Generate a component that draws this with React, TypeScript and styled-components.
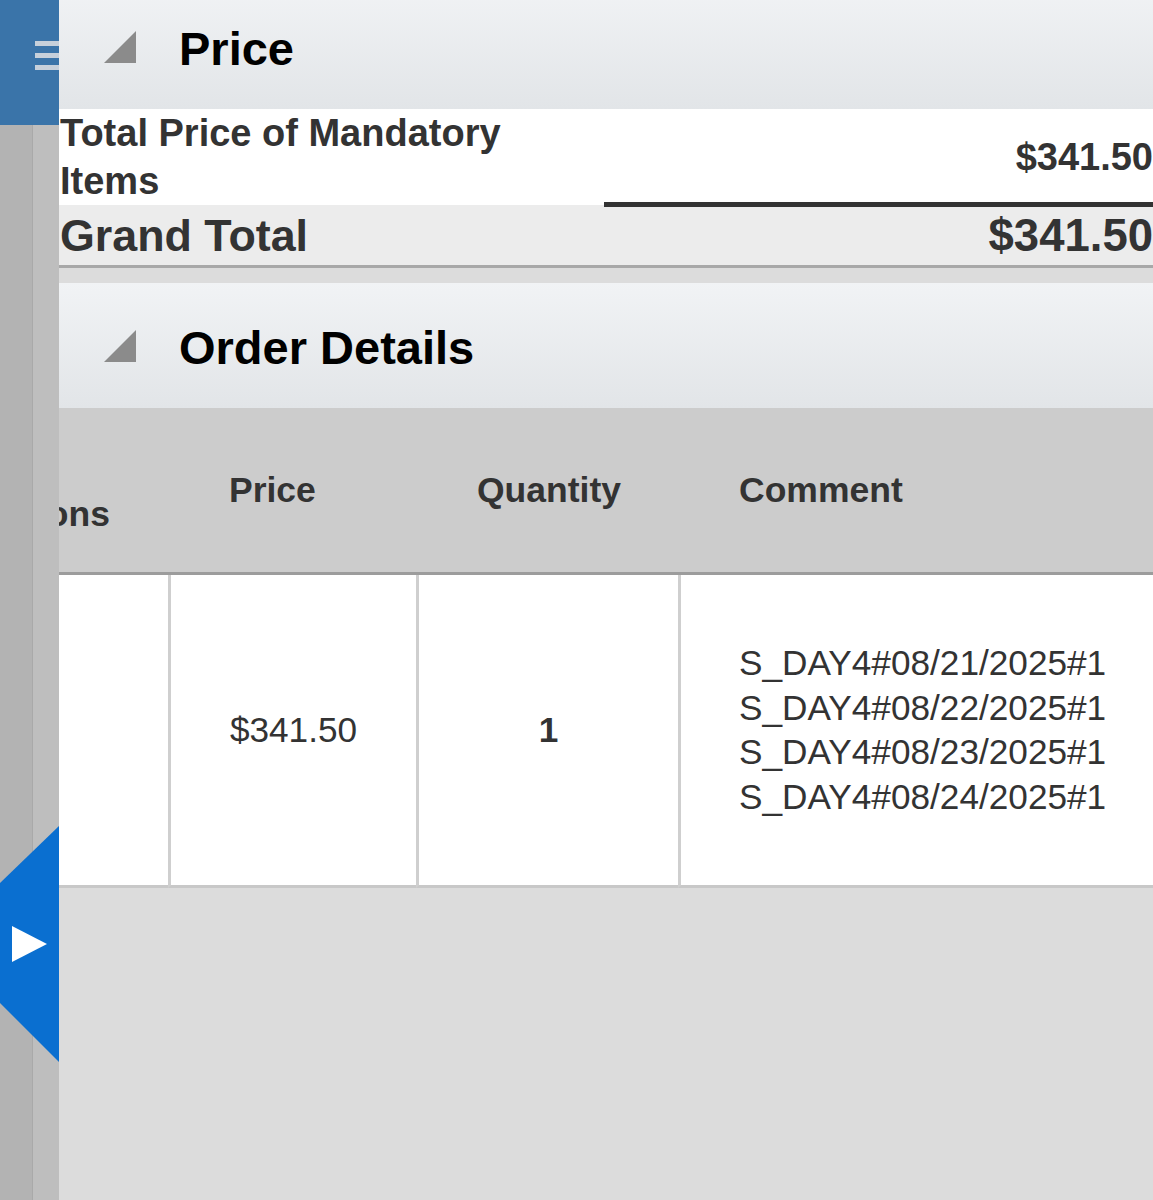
import React from "react";
import styled, { createGlobalStyle } from "styled-components";

const GlobalStyle = createGlobalStyle`
  html, body {
    margin: 0;
    padding: 0;
  }
  body {
    background: #dcdcdc;
    color: #333;
    font-family: "Liberation Sans", Arial, Helvetica, sans-serif;
  }
  * {
    box-sizing: border-box;
  }
`;

const Shell = styled.div`
  display: flex;
  min-height: 1200px;
  overflow: hidden;
`;

/* ---------- left rail ---------- */

const Sidebar = styled.aside`
  position: relative;
  flex: 0 0 59px;
  display: flex;
  flex-direction: column;
  background: linear-gradient(
    to right,
    #b3b3b3 0,
    #b3b3b3 32px,
    #a9a9a9 32px,
    #a9a9a9 33px,
    #bebebe 33px
  );
`;

const MenuBlock = styled.div`
  height: 125px;
  background: #3a74a9;
  display: flex;
  justify-content: flex-end;
  padding-top: 41px;
`;

const MenuIcon = styled.div`
  width: 24px;
  display: flex;
  flex-direction: column;
  gap: 7px;
`;

const MenuLine = styled.span`
  display: block;
  height: 5px;
  background: #c6d0db;
`;

const DrawerTab = styled.button`
  position: absolute;
  left: 0;
  top: 826px;
  width: 59px;
  height: 236px;
  padding: 0 0 0 12px;
  border: 0;
  background: #0a6fd0;
  clip-path: polygon(100% 0, 0 57px, 0 177px, 100% 100%);
  display: flex;
  align-items: center;
  cursor: pointer;
`;

const PlayMark = styled.span`
  width: 0;
  height: 0;
  border-left: 35px solid #fff;
  border-top: 18px solid transparent;
  border-bottom: 18px solid transparent;
`;

/* ---------- main column ---------- */

const Main = styled.main`
  flex: 1;
  min-width: 0;
  overflow: hidden;
`;

const Scroller = styled.div`
  margin-top: -16px;
`;

const SectionHeader = styled.div`
  height: 125px;
  display: flex;
  align-items: center;
  gap: 43px;
  padding-left: 45px;
  background: linear-gradient(to bottom, #f1f3f5, #e2e5e8);
`;

const SectionTitle = styled.h2`
  margin: 0;
  padding-top: 3px;
  font-size: 47px;
  line-height: 1;
  font-weight: 700;
  color: #000;
`;

const Collapse = () => (
  <svg width="32" height="32" viewBox="0 0 32 32" aria-hidden="true">
    <polygon points="32,0 32,32 0,32" fill="#8b8b8b" />
  </svg>
);

/* ---------- price summary ---------- */

const Summary = styled.div`
  display: grid;
  grid-template-columns: 545px 1fr;
  border-bottom: 3px solid #a8a8a8;
  margin-bottom: 15px;
`;

const SummaryLabel = styled.div<{ $grand?: boolean }>`
  background: ${(p) => (p.$grand ? "#ececec" : "#fff")};
  padding: 0 40px 0 1px;
  font-weight: 700;
  font-size: ${(p) => (p.$grand ? "44.8px" : "38px")};
  line-height: ${(p) => (p.$grand ? "60px" : "48px")};
  color: #333;
`;

const SummaryValue = styled.div<{ $grand?: boolean }>`
  background: ${(p) => (p.$grand ? "#ececec" : "#fff")};
  display: flex;
  align-items: center;
  justify-content: flex-end;
  font-weight: 700;
  font-size: ${(p) => (p.$grand ? "45.5px" : "38px")};
  line-height: 1;
  color: #333;
  border-top: ${(p) => (p.$grand ? "5px solid #333" : "0")};
  margin-top: ${(p) => (p.$grand ? "-3px" : "0")};
`;

/* ---------- order details table ---------- */

const OrderGrid = styled.div`
  display: grid;
  grid-template-columns: 109px 248px 262px 1fr;
`;

const HeadCell = styled.div<{ $first?: boolean }>`
  height: 167px;
  background: #cccccc;
  border-bottom: 3px solid #9c9c9c;
  display: flex;
  align-items: center;
  justify-content: ${(p) => (p.$first ? "flex-end" : "flex-start")};
  padding: ${(p) => (p.$first ? "0 58px 0 0" : "0 0 0 61px")};
  overflow: hidden;
  font-weight: 700;
  font-size: 35.5px;
  line-height: 48px;
  color: #333;
  white-space: nowrap;
`;

const HeadLines = styled.div`
  flex: none;
  text-align: left;

  span {
    display: block;
  }
`;

const BodyCell = styled.div<{ $first?: boolean; $align?: "center" | "left"; $bold?: boolean }>`
  height: 313px;
  background: #fff;
  border-bottom: 3px solid #c8c8c8;
  border-left: ${(p) => (p.$first ? "0" : "3px solid #cfcfcf")};
  display: flex;
  align-items: center;
  justify-content: ${(p) => (p.$align === "left" ? "flex-start" : "center")};
  padding-left: ${(p) => (p.$align === "left" ? "58px" : "0")};
  font-size: 35.2px;
  font-weight: ${(p) => (p.$bold ? 700 : 400)};
  color: #333;
`;

const CommentLines = styled.div`
  line-height: 44.5px;
  white-space: nowrap;

  span {
    display: block;
  }
`;

const comments = [
  "S_DAY4#08/21/2025#1",
  "S_DAY4#08/22/2025#1",
  "S_DAY4#08/23/2025#1",
  "S_DAY4#08/24/2025#1",
];

export default function App() {
  return (
    <>
      <GlobalStyle />
      <Shell>
        <Sidebar>
          <MenuBlock>
            <MenuIcon>
              <MenuLine />
              <MenuLine />
              <MenuLine />
            </MenuIcon>
          </MenuBlock>
          <DrawerTab aria-label="Open panel">
            <PlayMark />
          </DrawerTab>
        </Sidebar>

        <Main>
          <Scroller>
            <SectionHeader>
              <Collapse />
              <SectionTitle>Price</SectionTitle>
            </SectionHeader>

            <Summary>
              <SummaryLabel>Total Price of Mandatory Items</SummaryLabel>
              <SummaryValue>$341.50</SummaryValue>
              <SummaryLabel $grand>Grand Total</SummaryLabel>
              <SummaryValue $grand>$341.50</SummaryValue>
            </Summary>

            <SectionHeader>
              <Collapse />
              <SectionTitle>Order Details</SectionTitle>
            </SectionHeader>

            <OrderGrid>
              <HeadCell $first>
                <HeadLines>
                  <span>Add</span>
                  <span>Options</span>
                </HeadLines>
              </HeadCell>
              <HeadCell>Price</HeadCell>
              <HeadCell>Quantity</HeadCell>
              <HeadCell>Comment</HeadCell>

              <BodyCell $first />
              <BodyCell>$341.50</BodyCell>
              <BodyCell $bold>1</BodyCell>
              <BodyCell $align="left">
                <CommentLines>
                  {comments.map((c) => (
                    <span key={c}>{c}</span>
                  ))}
                </CommentLines>
              </BodyCell>
            </OrderGrid>
          </Scroller>
        </Main>
      </Shell>
    </>
  );
}
